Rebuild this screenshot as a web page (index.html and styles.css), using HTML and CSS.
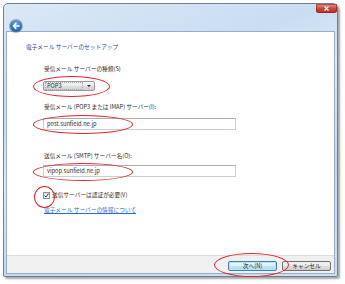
FILE: index.html
```html
<!DOCTYPE html>
<html>
<head>
<meta charset="utf-8">
<title>電子メール サーバーのセットアップ</title>
<link rel="stylesheet" href="styles.css">
</head>
<body>
<div class="window">
	<div class="titlebar">
		<span class="back">
			<svg width="12" height="12" viewBox="0 0 12 12"><path d="M9 6H3.6M5.8 3.6L3.4 6l2.4 2.4" fill="none" stroke="#fff" stroke-width="1.5" stroke-linecap="round" stroke-linejoin="round"/></svg>
		</span>
		<span class="close">
			<svg width="7" height="5" viewBox="0 0 7 5"><path d="M1.5 .5l4 4M5.5 .5l-4 4" stroke="#fff" stroke-width="1.1"/></svg>
		</span>
	</div>
	<div class="panel">
		<div class="content">
			<div class="heading">電子メール サーバーのセットアップ</div>
			<div class="form">
				<div class="label label-type">受信メール サーバーの種類(S)</div>
				<div class="select"><span class="select-text">POP3</span><span class="arrow"></span></div>
				<div class="label label-in">受信メール (POP3 または IMAP) サーバー(I):</div>
				<div class="input">post.sunfield.ne.jp</div>
				<div class="label label-out">送信メール (SMTP) サーバー名(O):</div>
				<div class="input input-out">vipop.sunfield.ne.jp</div>
				<div class="check-row">
					<span class="checkbox"><svg width="5" height="5" viewBox="0 0 5 5"><path d="M.6 2.6l1.3 1.4L4.4.7" fill="none" stroke="#2b3a4a" stroke-width="1"/></svg></span>
					<span>送信サーバーは認証が必要(V)</span>
				</div>
				<a class="link" href="#">電子メール サーバーの情報について</a>
			</div>
		</div>
		<div class="footer">
			<button class="btn btn-default">次へ(N)</button>
			<button class="btn">キャンセル</button>
		</div>
	</div>
</div>

<div class="mark mark-pop"></div>
<div class="mark mark-in"></div>
<div class="mark mark-out"></div>
<div class="mark mark-check"></div>
<div class="mark mark-next"></div>
</body>
</html>
```

FILE: styles.css
```css
html,body{margin: 0;padding: 0;}
body{position: relative;background-color: #fff;font-family: "Noto Sans CJK JP", "Noto Sans", sans-serif;font-size: 5.7px;line-height: 8px;color: #2c2c2c;width: 345px;height: 284px;overflow: hidden;}

/* window frame */
.window{margin: 3px 0 0 3px;width: 329px;padding: 0 2px 2px 2px;border: 1px solid #6f7f90;border-radius: 5px 5px 2px 2px;
	background: linear-gradient(160deg, #dbe8f6 0%, #c9ddf2 30%, #dceaf7 45%, #c4d9f0 70%, #cde0f3 100%);
	box-shadow: 2px 2px 2px rgba(0,0,0,.35);}
.titlebar{display: flex;align-items: flex-start;height: 27px;}
.back{display: flex;align-items: center;justify-content: center;width: 12px;height: 12px;margin: 16px 0 0 4px;border-radius: 50%;
	background: radial-gradient(circle at 50% 30%, #7fb0e6 0%, #3a78c2 45%, #1c4f95 100%);box-shadow: 0 0 0 1px rgba(90,110,140,.5);}
.close{display: flex;align-items: center;justify-content: center;width: 21px;height: 9px;margin-left: auto;margin-right: -2px;border-radius: 0 0 3px 3px;
	background: linear-gradient(#e7968c, #c9493d 50%, #b3302a);box-shadow: inset 0 0 0 1px rgba(120,20,10,.5);}

.panel{border: 1px solid #98adc4;background-color: #fff;}
.content{height: 212px;padding: 11px 0 0 19px;}
.heading{color: #2443a0;}
.form{padding-left: 18px;}
.label{margin-top: 7px;}
.label-type{margin-top: 14px;}
.label-in{margin-top: 12px;}
.label-out{margin-top: 22px;}

.select{display: flex;align-items: center;width: 50px;height: 8px;margin-top: 8px;margin-left: -1px;border: 1px solid #9a9b9b;border-radius: 2px;
	background: linear-gradient(#f3f3f3, #ebebeb 50%, #dddddd 51%, #d0d0d0);}
.select-text{margin-left: 2px;padding: 0 1px;width: 34px;line-height: 6px;outline: 1px dotted #a8a8a8;outline-offset: 0;}
.arrow{margin-left: auto;margin-right: 3px;width: 0;height: 0;border-left: 2px solid transparent;border-right: 2px solid transparent;border-top: 2px solid #333;}

.input{width: 188px;height: 10px;margin-top: 7px;margin-left: -1px;padding-left: 3px;border: 1px solid #c9ccd2;border-top-color: #abaeb5;line-height: 10px;background-color: #fff;}
.input-out{margin-top: 5px;}

.check-row{display: flex;align-items: center;gap: 2px;margin-top: 14px;margin-left: -1px;}
.checkbox{display: flex;align-items: center;justify-content: center;width: 5px;height: 5px;border: 1px solid #8a8f96;background: linear-gradient(#dfe3e8, #f7f8f9);}
.link{display: inline-block;margin-top: 7px;color: #1a70d0;text-decoration: underline;}

.footer{display: flex;justify-content: flex-end;gap: 5px;padding: 5px 3px 0 0;box-sizing: border-box;height: 18px;border-top: 1px solid #dcdcdc;background-color: #f0f0f0;}
.btn{width: 49px;height: 10px;padding: 0;border: 1px solid #707070;border-radius: 2px;font-family: inherit;font-size: 5.7px;line-height: 8px;color: #222;
	background: linear-gradient(#f2f2f2, #ebebeb 50%, #dddddd 51%, #cfcfcf);}
.btn-default{border-color: #3c7fb1;box-shadow: inset 0 0 0 1px #b8e3fb;background: linear-gradient(#eaf6fd, #d9f0fc 50%, #bee6fd 51%, #a7d9f5);}

/* red annotation marks drawn over the screenshot */
.mark{position: absolute;border: 1.2px solid #e2252b;border-radius: 50%;box-sizing: border-box;}
.mark-pop{left: 33px;top: 76px;width: 77px;height: 21px;}
.mark-in{left: 33px;top: 115px;width: 100px;height: 19px;}
.mark-out{left: 33px;top: 163px;width: 100px;height: 18px;}
.mark-check{left: 34px;top: 186px;width: 21px;height: 22px;}
.mark-next{left: 214px;top: 253px;width: 75px;height: 24px;}
```
